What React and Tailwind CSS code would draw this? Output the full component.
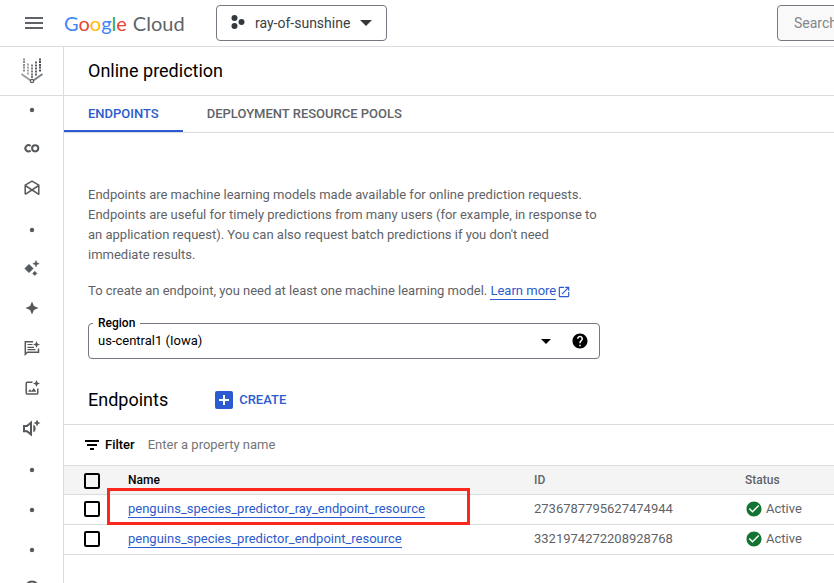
import React from "react";
import {
  MdMenu,
  MdCheckCircle,
  MdHelp,
  MdArrowDropDown,
  MdOpenInNew,
  MdAddBox,
} from "react-icons/md";

const endpoints = [
  { name: "penguins_species_predictor_ray_endpoint_resource", id: "2736787795627474944", status: "Active", highlighted: true },
  { name: "penguins_species_predictor_endpoint_resource", id: "3321974272208928768", status: "Active", highlighted: false },
];

function Icon({ children }) {
  return (
    <svg viewBox="0 0 24 24" className="size-6 shrink-0" fill="none" aria-hidden="true">
      {children}
    </svg>
  );
}

function VertexLogo() {
  const columns = [
    { x: 4, dots: [0.5, 3, 6, 8.5, 11.5], fill: "#8d9196" },
    { x: 8, dots: [5.5, 8.5, 11.5, 14.5], fill: "#a3a6aa" },
    { x: 12, dots: [6.5, 9.5, 12.5, 15.5, 18], fill: "#77797d" },
    { x: 16, dots: [3.5, 6.5, 9.5, 12.5, 15.5], fill: "#5f6266" },
    { x: 20, dots: [0.5, 3, 6, 8.5, 11.5], fill: "#4b4e52" },
  ];
  return (
    <svg viewBox="0 0 24 26" className="h-[26px] w-6" fill="none" aria-hidden="true">
      {columns.map((c) =>
        c.dots.map((y) => <rect key={c.x + "-" + y} x={c.x - 1} y={y} width="2" height="2" fill={c.fill} />)
      )}
      <path d="M1.500 16 12 23.500" stroke="#9a9da1" strokeWidth="2" />
      <path d="M22.500 16 12 23.500" stroke="#7d8084" strokeWidth="2" />
      <circle cx="12" cy="23" r="1.600" fill="#fff" stroke="#55585c" strokeWidth="1.200" />
    </svg>
  );
}

const Dot = () => (
  <Icon>
    <circle cx="12" cy="14" r="2.200" fill="currentColor" />
  </Icon>
);

const railItems = [
  { label: "Tools", icon: <Dot /> },
  {
    label: "Colab Enterprise",
    icon: (
      <Icon>
        <path d="M10.600 10A3.100 3.100 0 1 0 10.600 14.600" stroke="currentColor" strokeWidth="2" />
        <circle cx="15.200" cy="12.300" r="3.100" stroke="currentColor" strokeWidth="2" />
      </Icon>
    ),
  },
  {
    label: "Workbench",
    icon: (
      <Icon>
        <path d="M5.200 18.300V9.200L12 5.200l6.800 4v9.100L5.200 9.500M18.800 9.500 5.200 18.300" stroke="currentColor" strokeWidth="1.500" strokeLinejoin="round" />
      </Icon>
    ),
  },
  { label: "Studio", icon: <Dot /> },
  {
    label: "Overview",
    icon: (
      <Icon>
        <path d="M9 8.500 13 12.500 9 16.500 5 12.500Z" fill="currentColor" stroke="currentColor" strokeLinejoin="round" />
        <path d="M16 4.500 16.900 6.800 19.200 7.700 16.900 8.600 16 10.900 15.100 8.600 12.800 7.700 15.100 6.800Z" fill="currentColor" stroke="currentColor" strokeWidth="0.5" />
        <path d="m14.800 15.200 2.100 2.200-2.100 2.200-2.200-2.200Z" fill="currentColor" stroke="currentColor" strokeWidth="0.5" strokeLinejoin="round" />
      </Icon>
    ),
  },
  {
    label: "Multimodal",
    icon: (
      <Icon>
        <path d="M12 5.500 13.900 10.100 18.500 12 13.900 13.900 12 18.500 10.100 13.900 5.500 12 10.100 10.100Z" fill="currentColor" />
      </Icon>
    ),
  },
  {
    label: "Language",
    icon: (
      <Icon>
        <path d="M13 5.700H5.300v12.600l2.200-2h11V12.500" stroke="currentColor" strokeWidth="1.500" />
        <path d="M7.500 8.500h5M7.500 11.300h6.500M7.500 13.700h8" stroke="currentColor" strokeWidth="1.200" />
        <path d="m16.500 5 1 2.500 2.500 1-2.500 1-1 2.500-1-2.500-2.500-1 2.500-1Z" fill="currentColor" />
      </Icon>
    ),
  },
  {
    label: "Vision",
    icon: (
      <Icon>
        <path d="M12.500 6.300H7.200q-1 0-1 1v9.600q0 1 1 1h9.600q1 0 1-1V12.500" stroke="currentColor" strokeWidth="1.500" />
        <path d="m8 15.800 2-2.600 1.500 1.800 2.300-3 2.500 3.800Z" fill="currentColor" />
        <path d="m16.500 4 1.100 2.500 2.400 1-2.400 1-1.100 2.500-1.100-2.500-2.400-1 2.400-1Z" fill="currentColor" />
      </Icon>
    ),
  },
  {
    label: "Speech",
    icon: (
      <Icon>
        <path d="M4 9.900h3l4-3.300v11.800l-4-3.200H4Z" stroke="currentColor" strokeWidth="2" />
        <path d="M13.300 8.500q2.400 1.200 2.400 4t-2.400 4Z" fill="currentColor" />
        <path d="m17 3.500 1.100 2.400 2.400 1.100-2.400 1.100-1.100 2.400-1.100-2.400-2.400-1.100 2.400-1.100Z" fill="currentColor" />
      </Icon>
    ),
  },
  { label: "Data", icon: <Dot /> },
  { label: "Model development", icon: <Dot /> },
  { label: "Deploy and use", icon: <Dot /> },
  {
    label: "Online prediction",
    icon: (
      <Icon>
        <circle cx="12" cy="12" r="6.500" stroke="currentColor" strokeWidth="2" />
      </Icon>
    ),
  },
];

function TopBar() {
  return (
    <header className="flex h-[47px] shrink-0 items-center overflow-hidden border-b border-[#dadce0] pl-[22px]">
      <button type="button" aria-label="Main menu" className="shrink-0 text-[#5f6368]">
        <MdMenu className="size-6" />
      </button>
      <a href="#home" className="ml-[18px] flex w-[152px] shrink-0 gap-1.5 font-['Lato',sans-serif] text-xl leading-6">
        <span>
          <span className="text-[#4285f4]">G</span>
          <span className="text-[#ea4335]">o</span>
          <span className="text-[#fbbc04]">o</span>
          <span className="text-[#4285f4]">g</span>
          <span className="text-[#34a853]">l</span>
          <span className="text-[#ea4335]">e</span>
        </span>
        <span className="text-[#5f6368]">Cloud</span>
      </a>
      <button
        type="button"
        className="flex h-9 w-[171px] shrink-0 items-center rounded border border-[#747880] pl-3.5 text-sm text-[#3c4043]"
      >
        <svg viewBox="0 0 16 16" className="size-4 fill-[#34393d]" aria-hidden="true">
          <circle cx="3.500" cy="3" r="3" />
          <circle cx="10.500" cy="7" r="3" />
          <circle cx="3.500" cy="11" r="3" />
        </svg>
        <span className="ml-2">ray-of-sunshine</span>
        <svg viewBox="0 0 12 6" className="ml-2.5 h-1.5 w-3 fill-[#34393d]" aria-hidden="true">
          <path d="M0 0h12L6 6Z" />
        </svg>
      </button>
      <input
        type="search"
        aria-label="Search"
        placeholder="Search"
        className="ml-[390px] h-9 w-[400px] shrink-0 rounded border border-[#747880] bg-[#f9f9f9] px-4 text-sm placeholder:text-[#80868b]"
      />
    </header>
  );
}

function SideRail() {
  return (
    <nav aria-label="Vertex AI" className="w-16 shrink-0 overflow-hidden border-r border-[#dadce0] text-[#55585b]">
      <a href="#vertex" aria-label="Vertex AI" className="flex h-[49px] items-center justify-center border-b border-[#dadce0]">
        <VertexLogo />
      </a>
      <ul className="flex flex-col gap-4">
        {railItems.map((item) => (
          <li key={item.label} className="flex justify-center">
            <a href="#section" aria-label={item.label}>
              {item.icon}
            </a>
          </li>
        ))}
      </ul>
    </nav>
  );
}

function Tabs() {
  return (
    <div role="tablist" className="flex h-[37px] border-b border-[#dadce0] text-[13px] font-medium">
      <button type="button" role="tab" aria-selected="true" className="border-b-2 border-[#2b5bce] px-6 pt-0.5 text-[#2b5bce]">
        ENDPOINTS
      </button>
      <button type="button" role="tab" aria-selected="false" className="border-b-2 border-transparent px-6 pt-0.5 text-[#5f6368]">
        DEPLOYMENT RESOURCE POOLS
      </button>
    </div>
  );
}

function RegionField() {
  return (
    <div className="relative mt-[22px] flex h-9 max-w-[512px] items-center rounded border border-[#747880]">
      <label htmlFor="region" className="absolute -top-[9px] left-1 bg-white px-[5px] text-xs leading-4 font-medium text-black">
        Region
      </label>
      <select id="region" className="h-full w-full appearance-none bg-transparent pl-[9px] text-[13px] text-black">
        <option>us-central1 (Iowa)</option>
      </select>
      <MdArrowDropDown className="pointer-events-none absolute right-[41px] size-6 text-black" />
      <button type="button" aria-label="Help" className="absolute right-2.5 text-black">
        <MdHelp className="size-[18px]" />
      </button>
    </div>
  );
}

function Checkbox({ label }) {
  return (
    <input
      type="checkbox"
      aria-label={label}
      className="block size-4 appearance-none rounded-xs border-2 border-black checked:bg-[#2b5bce]"
    />
  );
}

function EndpointTable() {
  return (
    <table className="w-full table-fixed border-collapse text-left text-[13px] leading-5 text-[#5f6368]">
      <colgroup>
        <col className="w-16" />
        <col className="w-[406px]" />
        <col className="w-[211px]" />
        <col />
      </colgroup>
      <thead className="text-xs">
        <tr className="h-[29px] border-y border-[#dadce0] bg-[#f4f4f4]">
          <th className="pt-0.5 pl-5">
            <Checkbox label="Select all endpoints" />
          </th>
          <th className="font-medium text-black">Name</th>
          <th className="font-medium">ID</th>
          <th className="font-medium">Status</th>
        </tr>
      </thead>
      <tbody>
        {endpoints.map((row) => (
          <tr key={row.id} className="h-[30px] border-b border-[#dadce0]">
            <td className="pb-0.5 pl-5">
              <Checkbox label={"Select " + row.name} />
            </td>
            <td className="pb-0.5">
              <div className="relative">
                <a href="#endpoint" className="inline-block border-b border-[#2b5bce] leading-4 text-[#2b5bce]">
                  {row.name}
                </a>
                {row.highlighted && (
                  <span className="pointer-events-none absolute -top-[11px] -left-[21px] h-[37px] w-[363px] border-[3px] border-[#fc281c]" />
                )}
              </div>
            </td>
            <td className="pb-0.5">{row.id}</td>
            <td className="pb-0.5">
              <span className="flex items-center gap-[3px]">
                <MdCheckCircle className="size-[18px] text-[#137333]" />
                {row.status}
              </span>
            </td>
          </tr>
        ))}
      </tbody>
    </table>
  );
}

export default function App() {
  return (
    <div className="flex h-screen flex-col overflow-hidden bg-white font-['Roboto',sans-serif] text-[13px] text-[#5f6368]">
      <TopBar />
      <div className="flex min-h-0 flex-1">
        <SideRail />
        <main className="min-w-0 flex-1">
          <h1 className="flex h-[49px] items-center border-b border-[#dadce0] px-6 text-lg text-black">Online prediction</h1>
          <Tabs />
          <section className="px-6 pt-[52px] leading-5">
            <p className="max-w-[512px]">
              Endpoints are machine learning models made available for online prediction requests. Endpoints are useful
              for timely predictions from many users (for example, in response to an application request). You can also
              request batch predictions if you don't need immediate results.
            </p>
            <p className="mt-4">
              To create an endpoint, you need at least one machine learning model.{" "}
              <a href="#learn" className="inline-flex items-center gap-px text-[#2b5bce]">
                <span className="border-b border-[#2b5bce] leading-4">Learn more</span>
                <MdOpenInNew className="size-3.5" />
              </a>
            </p>
            <RegionField />
          </section>
          <div className="mt-5 flex h-[46px] items-center gap-11 border-b border-[#dadce0] px-6 pb-1">
            <h2 className="text-lg text-black">Endpoints</h2>
            <button type="button" className="flex items-center gap-[3px] font-medium text-[#2b5bce]">
              <MdAddBox className="size-6" />
              CREATE
            </button>
          </div>
          <div className="flex h-10 items-center pl-[21px]">
            <svg viewBox="0 0 14 10" className="h-2.5 w-3.5 fill-black" aria-hidden="true">
              <path d="M0 0h14v2H0ZM2 4h10v2H2ZM5 8h4v2H5Z" />
            </svg>
            <label htmlFor="filter" className="ml-1.5 font-medium text-black">
              Filter
            </label>
            <input
              id="filter"
              type="text"
              placeholder="Enter a property name"
              className="ml-[13px] min-w-0 flex-1 placeholder:text-[#757575]"
            />
          </div>
          <EndpointTable />
        </main>
      </div>
    </div>
  );
}
